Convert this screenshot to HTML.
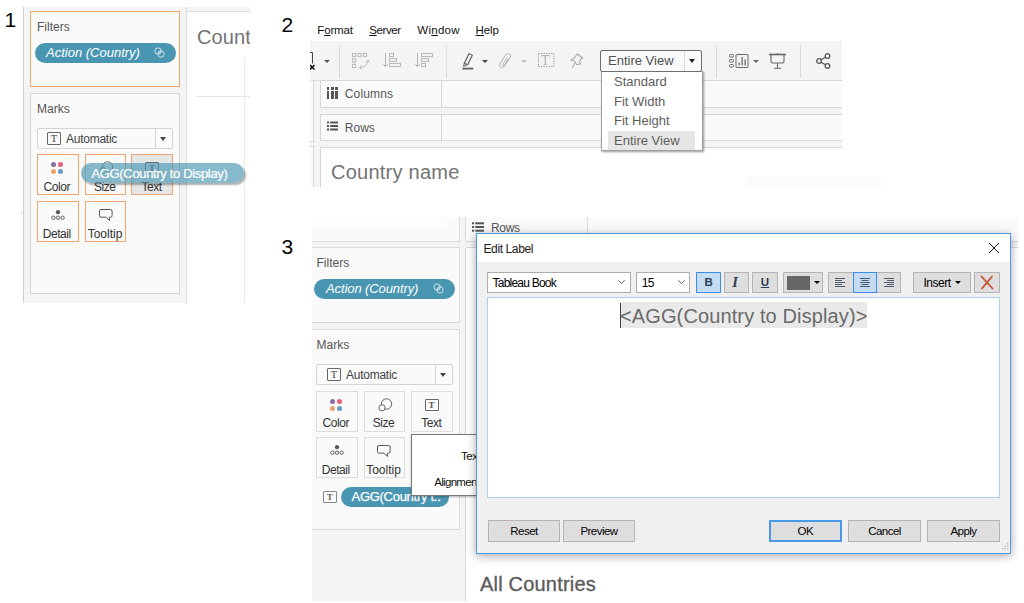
<!DOCTYPE html>
<html>
<head>
<meta charset="utf-8">
<title>Tableau steps</title>
<style>
html,body{margin:0;padding:0;background:#fff;}
body{width:1024px;height:603px;position:relative;overflow:hidden;font-family:"Liberation Sans",sans-serif;color:#333;}
.a{position:absolute;box-sizing:border-box;}
.t{position:absolute;white-space:pre;line-height:1;}
.num{font-size:21px;color:#000;}
.card{background:#fafafa;border:1px solid #d4d4d4;}
.pill{background:#4996b2;border-radius:10px;color:#fff;}
.lbl{font-size:12px;color:#555;}
.mbtn{background:#fafafa;border:1px solid #dcdcdc;}
.mbtn.o{border-color:#f0a56f;}
.mtx{font-size:12px;color:#333;text-align:center;width:100%;left:0;letter-spacing:-0.45px;box-sizing:border-box;}
.dot{position:absolute;width:5px;height:5px;border-radius:50%;}
svg{position:absolute;overflow:visible;}
.mn{font-size:11.5px;color:#111;}
.dd{font-size:13px;color:#5e5e5e;}
.arr{width:0;height:0;border-left:3px solid transparent;border-right:3px solid transparent;border-top:3px solid #555;}
.bt{font-size:11.500px;color:#000;text-align:center;letter-spacing:-0.550px;}
.wbtn{background:#dedede;border-radius:0.5px;border:1px solid #b4b4b4;font-size:12px;color:#000;}
.wbtn.sel{background:#c4ddf4;border-color:#3a8ee6;}
</style>
</head>
<body>

<!-- ================= PANEL 1 ================= -->
<div class="t num" style="left:4.6px;top:9.1px;">1</div>
<div class="a" style="left:20px;top:212px;width:3px;height:1px;background:#e0e0e0;"></div>
<div class="a" id="p1" style="left:23px;top:7px;width:227px;height:296px;background:#fff;overflow:hidden;">
  <div class="a" style="left:0;top:0;width:227px;height:5px;background:#f4f4f4;"></div>
  <div class="a" style="left:163px;top:4px;width:70px;height:300px;background:#fff;border:1px solid #dcdcdc;"></div>
  <!-- side pane -->
  <div class="a" style="left:0;top:0;width:164px;height:296px;background:#f4f4f4;border-left:1px solid #cfcfcf;border-right:1px solid #dedede;"></div>
  <!-- filters card -->
  <div class="a card o" style="left:7px;top:4px;width:150px;height:76px;border-color:#f0a56f;"></div>
  <div class="t lbl" style="left:14px;top:14px;">Filters</div>
  <div class="a pill" style="left:12px;top:36px;width:141px;height:20px;"></div>
  <div class="t" style="left:23px;top:39px;font-size:13px;font-style:italic;color:#fff;">Action (Country)</div>
  <svg style="left:130.700px;top:40px;" width="11.500" height="11.500" viewBox="0 0 13 13"><g opacity="0.82"><circle cx="4.6" cy="4.6" r="3.6" fill="none" stroke="#fff" stroke-width="1"/><circle cx="7.9" cy="7.9" r="3.6" fill="none" stroke="#fff" stroke-width="1"/><path d="M5.2 7.6L7.6 5.2" stroke="#fff" stroke-width="1"/></g></svg>
  <!-- marks card -->
  <div class="a card" style="left:7px;top:86px;width:150px;height:201px;"></div>
  <div class="t lbl" style="left:14px;top:96px;">Marks</div>
  <div class="a" style="left:14px;top:121px;width:136px;height:21px;background:#fafafa;border:1px solid #d4d4d4;border-radius:2px;"></div>
  <div class="a" style="left:132px;top:122px;width:1px;height:19px;background:#d4d4d4;"></div>
  <div class="a" style="left:24px;top:125px;width:14px;height:12.500px;border:1px solid #666;border-radius:1px;"></div>
  <div class="t" style="left:27.700px;top:127px;font-size:10.500px;font-family:'Liberation Serif',serif;color:#444;">T</div>
  <div class="t" style="left:43px;top:125.700px;font-size:12px;color:#444;letter-spacing:-0.25px;">Automatic</div>
  <div class="a" style="left:137px;top:130px;width:0;height:0;border-left:3.5px solid transparent;border-right:3.5px solid transparent;border-top:4px solid #444;"></div>

  <!-- mark buttons -->
  <div class="a mbtn o" style="left:14px;top:147px;width:42px;height:41px;">
    <div class="dot" style="left:13px;top:7px;background:#8b6ca3;"></div>
    <div class="dot" style="left:20px;top:7px;background:#e8607c;"></div>
    <div class="dot" style="left:13px;top:14px;background:#eda26e;"></div>
    <div class="dot" style="left:20px;top:14px;background:#6b9bc8;"></div>
    <div class="t mtx" style="top:26px;padding-right:2.5px;">Color</div>
  </div>
  <div class="a mbtn o" style="left:61.500px;top:147px;width:41.500px;height:41px;">
    <svg style="left:13px;top:5px;" width="16" height="16" viewBox="0 0 16 16"><circle cx="8.5" cy="7" r="5.2" fill="none" stroke="#666" stroke-width="1"/><circle cx="4" cy="10.8" r="3.1" fill="#fafafa" stroke="#666" stroke-width="1"/></svg>
    <div class="t mtx" style="top:26px;padding-right:1px;">Size</div>
  </div>
  <div class="a mbtn o" style="left:108px;top:147px;width:42px;height:41px;background:#e6e6e6;">
    <div class="a" style="left:13px;top:7px;width:14px;height:12px;border:1px solid #666;border-radius:1px;"></div>
    <div class="t" style="left:17px;top:9px;font-size:9px;font-weight:bold;font-family:'Liberation Serif',serif;color:#555;">T</div>
    <div class="t mtx" style="top:26px;padding-right:1px;">Text</div>
  </div>
  <div class="a mbtn o" style="left:14px;top:194px;width:42px;height:41px;">
    <svg style="left:12px;top:8px;" width="16" height="11" viewBox="0 0 16 11"><circle cx="8" cy="2.2" r="2.1" fill="#555"/><circle cx="3.4" cy="7.7" r="1.7" fill="none" stroke="#555" stroke-width="0.9"/><circle cx="8" cy="7.7" r="1.7" fill="none" stroke="#555" stroke-width="0.9"/><circle cx="12.6" cy="7.7" r="1.7" fill="none" stroke="#555" stroke-width="0.9"/></svg>
    <div class="t mtx" style="top:26px;padding-right:2.5px;">Detail</div>
  </div>
  <div class="a mbtn o" style="left:62px;top:194px;width:41px;height:41px;">
    <svg style="left:12.500px;top:6.500px;" width="15" height="13" viewBox="0 0 15 13"><path d="M2 0.500h9.600a1.500 1.500 0 0 1 1.500 1.500v4.700a1.500 1.500 0 0 1-1.500 1.500h-1.200v3.300l-3.300-3.300h-5.100a1.500 1.500 0 0 1-1.500-1.500v-4.700a1.500 1.500 0 0 1 1.500-1.500z" fill="none" stroke="#555" stroke-width="1"/></svg>
    <div class="t mtx" style="top:26px;letter-spacing:0;padding-right:1px;">Tooltip</div>
  </div>

  <!-- canvas -->
  <div class="t" style="left:174px;top:19.5px;font-size:20px;color:#737373;letter-spacing:0.1px;">Count</div>
  <div class="a" style="left:173px;top:89px;width:60px;height:1px;background:#e6e6e6;"></div>
  <div class="a" style="left:221px;top:51px;width:1px;height:245px;background:#ececec;"></div>

  <!-- dragged pill -->
  <div class="a" style="left:58px;top:156px;width:163px;height:20px;border-radius:10px;background:rgba(73,150,178,0.66);box-shadow:2px 2px 2px rgba(0,0,0,0.32);"></div>
  <div class="t" style="left:68.5px;top:159.5px;font-size:13px;color:#fff;letter-spacing:-0.34px;-webkit-text-stroke:0.2px #fff;">AGG(Country to Display)</div>
</div>

<!-- ================= PANEL 2 ================= -->
<div class="t num" style="left:281.5px;top:14.3px;">2</div>
<div class="t mn" style="left:317.3px;top:24.9px;letter-spacing:-0.15px;">F<u>o</u>rmat</div>
<div class="t mn" style="left:369.3px;top:24.9px;letter-spacing:-0.4px;"><u>S</u>erver</div>
<div class="t mn" style="left:417.3px;top:24.9px;letter-spacing:0.27px;">Wi<u>n</u>dow</div>
<div class="t mn" style="left:475.5px;top:24.9px;letter-spacing:-0.05px;"><u>H</u>elp</div>

<div class="a" id="p2" style="left:310px;top:41px;width:532px;height:146px;overflow:hidden;">
  <!-- gray chrome: toolbar + shelves (right part ends at 106) -->
  <div class="a" style="left:0;top:0;width:532px;height:106.500px;background:#f4f4f4;"></div>
  <div class="a" style="left:0;top:0;width:10px;height:146px;background:#f4f4f4;"></div>
  <!-- toolbar bottom line -->
  <div class="a" style="left:0;top:39px;width:532px;height:1px;background:#dcdcdc;"></div>
  <!-- left narrow strip -->
  <div class="a" style="left:0;top:40px;width:4px;height:106px;background:#fafafa;border-right:1px solid #d8d8d8;"></div>
  <div class="a" style="left:0;top:100px;width:5px;height:6px;background:#f4f4f4;border-top:1px solid #d8d8d8;border-bottom:1px solid #d8d8d8;"></div>
  <!-- columns shelf -->
  <div class="a" style="left:10px;top:39px;width:530px;height:28px;background:#fafafa;border:1px solid #d6d6d6;"></div>
  <div class="a" style="left:131px;top:40px;width:1px;height:26px;background:#d6d6d6;"></div>
  <!-- rows shelf -->
  <div class="a" style="left:10px;top:73px;width:530px;height:27px;background:#fafafa;border:1px solid #d6d6d6;"></div>
  <div class="a" style="left:131px;top:74px;width:1px;height:25px;background:#d6d6d6;"></div>
  <!-- canvas -->
  <div class="a" style="left:10px;top:106px;width:530px;height:60px;background:#fff;border:1px solid #d6d6d6;border-bottom:none;"></div>
  <div class="t" style="left:21px;top:121px;font-size:20px;color:#737373;letter-spacing:0.25px;">Country name</div>

  <!-- shelf labels -->
  <div class="a" style="left:17px;top:46px;width:2.4px;height:2.6px;background:#555;"></div>
  <div class="a" style="left:21.2px;top:46px;width:2.4px;height:2.6px;background:#555;"></div>
  <div class="a" style="left:25.4px;top:46px;width:2.4px;height:2.6px;background:#555;"></div>
  <div class="a" style="left:17px;top:50px;width:2.4px;height:8px;background:#555;"></div>
  <div class="a" style="left:21.2px;top:50px;width:2.4px;height:8px;background:#555;"></div>
  <div class="a" style="left:25.4px;top:50px;width:2.4px;height:8px;background:#555;"></div>
  <div class="t" style="left:34.8px;top:47px;font-size:12px;color:#555;letter-spacing:0.15px;">Columns</div>

  <svg style="left:17px;top:80.200px;" width="11" height="10" viewBox="0 0 11 10"><g fill="#555"><rect x="0" y="0.5" width="2" height="2"/><rect x="3.2" y="0.5" width="7.8" height="2"/><rect x="0" y="4" width="2" height="2"/><rect x="3.2" y="4" width="7.800" height="2"/><rect x="0" y="7.500" width="2" height="2"/><rect x="3.2" y="7.500" width="7.800" height="2"/></g></svg>
  <div class="t" style="left:34.8px;top:80.500px;font-size:12px;color:#555;letter-spacing:0;">Rows</div>

  <!-- toolbar separators -->
  <div class="a" style="left:28.500px;top:4px;width:1px;height:33px;background:#dadada;"></div>
  <div class="a" style="left:135.500px;top:4px;width:1px;height:33px;background:#dadada;"></div>
  <div class="a" style="left:406px;top:4px;width:1px;height:33px;background:#dadada;"></div>
  <div class="a" style="left:490px;top:4px;width:1px;height:33px;background:#dadada;"></div>

  <!-- partial icon at left -->
  <svg style="left:0;top:11px;" width="6" height="18" viewBox="0 0 6 18"><path d="M0 0.500H2.500V11.500" fill="none" stroke="#444" stroke-width="1"/><path d="M0 13L4.500 17.500M4.500 13L0 17.500" stroke="#111" stroke-width="1.600"/></svg>
  <div class="a arr" style="left:13.500px;top:19px;border-top-color:#555;"></div>

  <!-- swap icon -->
  <svg style="left:42px;top:12px;" width="18" height="17" viewBox="0 0 18 17"><g fill="none" stroke="#b9b9b9" stroke-width="1"><rect x="0.500" y="0.500" width="3.200" height="3.200"/><rect x="5.900" y="0.500" width="3.200" height="3.200"/><rect x="11.300" y="0.500" width="3.200" height="3.200"/><rect x="0.500" y="5.900" width="3.200" height="3.200"/><rect x="0.500" y="11.300" width="3.200" height="3.200"/><path d="M16.200 7.300Q15.800 13.600 7.600 14.600"/><path d="M14.300 9.400L16.200 7L17.600 9.600M9.900 12.700L7.300 14.600L9.900 16.500"/></g></svg>
  <!-- sort asc -->
  <svg style="left:73px;top:12px;" width="18" height="15" viewBox="0 0 18 15"><g fill="none" stroke="#b9b9b9" stroke-width="1"><path d="M2.500 0V13.500M0.500 11L2.500 13.800L4.500 11"/><rect x="6.500" y="0.500" width="4" height="3"/><rect x="6.500" y="5.500" width="7" height="3"/><rect x="6.500" y="10.500" width="11" height="3"/></g></svg>
  <!-- sort desc -->
  <svg style="left:104.500px;top:12px;" width="18" height="15" viewBox="0 0 18 15"><g fill="none" stroke="#b9b9b9" stroke-width="1"><path d="M2.500 0V13.500M0.500 11L2.500 13.800L4.500 11"/><rect x="6.500" y="0.500" width="11" height="3"/><rect x="6.500" y="5.500" width="7" height="3"/><rect x="6.500" y="10.500" width="4" height="3"/></g></svg>

  <!-- highlighter -->
  <svg style="left:152px;top:12px;" width="12" height="17" viewBox="0 0 12 17"><path d="M7 0.700L10.300 2.200L5.600 11.800L2.300 10.300Z" fill="none" stroke="#606060" stroke-width="1.150"/><path d="M2.300 10.300L1.600 13.200L4.600 12.300" fill="none" stroke="#606060" stroke-width="1"/><rect x="0.300" y="14.700" width="11" height="1.800" fill="#606060"/></svg>
  <div class="a arr" style="left:172px;top:19px;border-top-color:#444;"></div>
  <!-- paperclip -->
  <svg style="left:189px;top:12px;" width="13" height="16" viewBox="0 0 13 16"><path d="M9.500 5.500L5 13.200C4.200 14.600 2.500 15 1.500 14.200C0.400 13.400 0.300 12 1 10.800L6.500 2C7.500 0.500 9.300 0.200 10.500 1.100C11.700 2 11.800 3.500 11 4.800L5.800 12.600C5.400 13.200 4.600 13.300 4.100 12.900C3.600 12.500 3.600 11.800 4 11.200L8.300 4.500" fill="none" stroke="#b0b0b0" stroke-width="1"/></svg>
  <div class="a arr" style="left:211px;top:19px;border-top-color:#bdbdbd;"></div>
  <!-- dashed T -->
  <svg style="left:227.500px;top:12px;" width="17" height="14" viewBox="0 0 17 14"><rect x="0.500" y="0.500" width="15.500" height="13" fill="none" stroke="#a8a8a8" stroke-width="1" stroke-dasharray="1.500 1"/></svg>
  <div class="t" style="left:231px;top:12.500px;font-size:14px;font-family:'Liberation Serif',serif;color:#b2b2b2;">T</div>
  <!-- pin -->
  <svg style="left:260px;top:12px;" width="14" height="16" viewBox="0 0 14 16"><path d="M6.300 0.800L12.500 4.200L11 5.200L10 8.800L11.300 10.500L7.500 11.500L4.500 8.200L1 7.800L4.500 5.200L6 1.800Z" fill="none" stroke="#a6a6a6" stroke-width="1" stroke-linejoin="round" transform="rotate(8 7 6)"/><path d="M5.300 9.500L2.300 15" stroke="#a6a6a6" stroke-width="1"/></svg>

  <!-- fit dropdown -->
  <div class="a" style="left:291px;top:30px;width:102px;height:80px;background:#fff;border:1px solid #a0a0a0;box-shadow:1px 1px 2px rgba(0,0,0,0.4);"></div>
  <div class="a" style="left:297.500px;top:90px;width:87px;height:19px;background:#e6e6e6;"></div>
  <div class="t dd" style="left:304px;top:34px;">Standard</div>
  <div class="t dd" style="left:304px;top:54px;">Fit Width</div>
  <div class="t dd" style="left:304px;top:72.700px;">Fit Height</div>
  <div class="t dd" style="left:304px;top:92.500px;">Entire View</div>
  <div class="a" style="left:290px;top:8.500px;width:101.500px;height:22px;background:#f9f9f9;border:1px solid #6e6e6e;border-radius:2px;"></div>
  <div class="a" style="left:373.500px;top:9.500px;width:1px;height:20px;background:#dcdcdc;"></div>
  <div class="t" style="left:298px;top:13px;font-size:13px;color:#505050;">Entire View</div>
  <div class="a" style="left:378.500px;top:18px;width:0;height:0;border-left:3.500px solid transparent;border-right:3.500px solid transparent;border-top:4px solid #222;"></div>

  <!-- show me -->
  <svg style="left:418.500px;top:13px;" width="20" height="14" viewBox="0 0 20 14"><g fill="none" stroke="#666" stroke-width="1"><rect x="0.500" y="0.500" width="4" height="2.600" rx="1"/><rect x="0.500" y="5.500" width="4" height="2.600" rx="1"/><rect x="0.500" y="10.500" width="4" height="2.600" rx="1"/><rect x="7" y="0.500" width="12" height="13" rx="0.500"/></g><g fill="#666"><rect x="9.500" y="8.500" width="1.300" height="3"/><rect x="12.500" y="3" width="1.300" height="8.500"/><rect x="15.500" y="5.500" width="1.300" height="6"/></g></svg>
  <div class="a arr" style="left:443px;top:19px;border-top-color:#666;"></div>
  <!-- presentation -->
  <svg style="left:459px;top:12px;" width="17" height="16" viewBox="0 0 17 16"><g fill="none" stroke="#666" stroke-width="1.100"><path d="M0 1.500H17" stroke-width="1.600"/><path d="M8.500 0V1.500"/><path d="M2 2V8.500Q2 10 3.500 10H13.500Q15 10 15 8.500V2"/><path d="M8.500 10V15M5 15.200H12"/></g></svg>
  <!-- share -->
  <svg style="left:505.500px;top:12px;" width="15" height="16" viewBox="0 0 15 16"><g fill="none" stroke="#555" stroke-width="1.300"><circle cx="3" cy="8" r="2.300"/><circle cx="11.500" cy="3" r="2.300"/><circle cx="11.500" cy="13" r="2.300"/><path d="M5 6.800L9.500 4.200M5 9.200L9.500 11.800"/></g></svg>
</div>
<!-- faint bar -->
<div class="a" style="left:747px;top:176px;width:134px;height:11px;background:#fbfbfb;"></div>

<!-- ================= PANEL 3 ================= -->
<div class="t num" style="left:281.6px;top:236.1px;">3</div>
<div class="a" id="p3" style="left:312px;top:217px;width:706px;height:384px;background:#fff;overflow:hidden;">
  <!-- top gray chrome strip -->
  <div class="a" style="left:0;top:0;width:706px;height:31px;background:#f4f4f4;"></div>
  <!-- left pane -->
  <div class="a" style="left:0;top:0;width:154px;height:384px;background:#f4f4f4;"></div>
  <!-- box above filters -->
  <div class="a" style="left:-2px;top:-2px;width:150px;height:27px;background:#fafafa;border:1px solid #d9d9d9;"></div>
  <div class="a" style="left:0;top:0;width:134px;height:11px;background:#fdfdfd;"></div>
  <!-- rows shelf -->
  <div class="a" style="left:153px;top:-2px;width:560px;height:27px;border-radius:2px;background:#fafafa;border:1px solid #d9d9d9;"></div>
  <div class="a" style="left:275px;top:0;width:1px;height:23px;background:#d9d9d9;"></div>
  <svg style="left:160px;top:5.300px;" width="12" height="10" viewBox="0 0 13 10" preserveAspectRatio="none"><g fill="#555"><rect x="0" y="0.300" width="2.300" height="2"/><rect x="3.600" y="0.300" width="9.400" height="2"/><rect x="0" y="4" width="2.300" height="2"/><rect x="3.600" y="4" width="9.400" height="2"/><rect x="0" y="7.700" width="2.300" height="2"/><rect x="3.600" y="7.700" width="9.400" height="2"/></g></svg>
  <div class="t" style="left:179px;top:4.500px;font-size:12px;color:#555;letter-spacing:-0.3px;">Rows</div>
  <!-- canvas box -->
  <div class="a" style="left:153px;top:30px;width:560px;height:400px;border-radius:2px;background:#fff;border:1px solid #d9d9d9;"></div>

  <!-- filters card -->
  <div class="a card" style="left:-2px;top:30px;width:150px;height:76px;border-color:#dadada;"></div>
  <div class="t lbl" style="left:4.500px;top:40px;">Filters</div>
  <div class="a pill" style="left:2px;top:62px;width:141px;height:20px;"></div>
  <div class="t" style="left:14px;top:65px;font-size:13px;font-style:italic;color:#fff;letter-spacing:-0.1px;">Action (Country)</div>
  <svg style="left:121px;top:66px;" width="11.500" height="11.500" viewBox="0 0 13 13"><g opacity="0.82"><circle cx="4.600" cy="4.600" r="3.600" fill="none" stroke="#fff" stroke-width="1"/><circle cx="7.900" cy="7.900" r="3.600" fill="none" stroke="#fff" stroke-width="1"/><path d="M5.200 7.600L7.600 5.200" stroke="#fff" stroke-width="1"/></g></svg>

  <!-- marks card -->
  <div class="a card" style="left:-2px;top:112px;width:150px;height:200.500px;border-color:#dadada;"></div>
  <div class="t lbl" style="left:4.500px;top:122px;">Marks</div>
  <div class="a" style="left:4px;top:147px;width:136.500px;height:21px;background:#fafafa;border:1px solid #d4d4d4;border-radius:2px;"></div>
  <div class="a" style="left:122.500px;top:148px;width:1px;height:19px;background:#d4d4d4;"></div>
  <div class="a" style="left:15px;top:151px;width:14px;height:12.500px;border:1px solid #666;border-radius:1px;"></div>
  <div class="t" style="left:18.700px;top:153px;font-size:10.500px;font-family:'Liberation Serif',serif;color:#444;">T</div>
  <div class="t" style="left:34px;top:151.800px;font-size:12px;color:#444;letter-spacing:-0.250px;">Automatic</div>
  <div class="a" style="left:127.500px;top:156px;width:0;height:0;border-left:3.500px solid transparent;border-right:3.500px solid transparent;border-top:4px solid #444;"></div>

  <div class="a mbtn" style="left:4px;top:173.500px;width:42px;height:41px;">
    <div class="dot" style="left:13px;top:7px;background:#8b6ca3;"></div>
    <div class="dot" style="left:20px;top:7px;background:#e8607c;"></div>
    <div class="dot" style="left:13px;top:14px;background:#eda26e;"></div>
    <div class="dot" style="left:20px;top:14px;background:#6b9bc8;"></div>
    <div class="t mtx" style="top:25.500px;padding-right:2.5px;">Color</div>
  </div>
  <div class="a mbtn" style="left:51.500px;top:173.500px;width:41px;height:41px;">
    <svg style="left:13px;top:5px;" width="16" height="16" viewBox="0 0 16 16"><circle cx="8.500" cy="7" r="5.200" fill="none" stroke="#666" stroke-width="1"/><circle cx="4" cy="10.800" r="3.100" fill="#fafafa" stroke="#666" stroke-width="1"/></svg>
    <div class="t mtx" style="top:25.500px;padding-right:1px;">Size</div>
  </div>
  <div class="a mbtn" style="left:98.500px;top:173.500px;width:42.500px;height:41px;">
    <div class="a" style="left:13px;top:7px;width:14px;height:12px;border:1px solid #666;border-radius:1px;"></div>
    <div class="t" style="left:17px;top:9px;font-size:9px;font-weight:bold;font-family:'Liberation Serif',serif;color:#555;">T</div>
    <div class="t mtx" style="top:25.500px;padding-right:1px;">Text</div>
  </div>
  <div class="a mbtn" style="left:4px;top:220px;width:42px;height:41px;">
    <svg style="left:12px;top:7px;" width="16" height="11" viewBox="0 0 16 11"><circle cx="8" cy="2.2" r="2.1" fill="#555"/><circle cx="3.4" cy="7.7" r="1.7" fill="none" stroke="#555" stroke-width="0.9"/><circle cx="8" cy="7.7" r="1.7" fill="none" stroke="#555" stroke-width="0.9"/><circle cx="12.6" cy="7.7" r="1.7" fill="none" stroke="#555" stroke-width="0.9"/></svg>
    <div class="t mtx" style="top:25.500px;padding-right:2.5px;">Detail</div>
  </div>
  <div class="a mbtn" style="left:51.500px;top:220px;width:41px;height:41px;">
    <svg style="left:12px;top:6.500px;" width="15" height="13" viewBox="0 0 15 13"><path d="M2 0.500h9.600a1.500 1.500 0 0 1 1.500 1.500v4.700a1.500 1.500 0 0 1-1.500 1.500h-1.200v3.300l-3.300-3.300h-5.100a1.500 1.500 0 0 1-1.500-1.500v-4.700a1.500 1.500 0 0 1 1.500-1.500z" fill="none" stroke="#555" stroke-width="1"/></svg>
    <div class="t mtx" style="top:25.500px;letter-spacing:0;padding-right:1px;">Tooltip</div>
  </div>

  <!-- text pill row -->
  <div class="a" style="left:11px;top:274px;width:14px;height:12px;border:1px solid #888;border-radius:1px;background:#fafafa;"></div>
  <div class="t" style="left:14.700px;top:276px;font-size:9px;font-weight:bold;font-family:'Liberation Serif',serif;color:#666;">T</div>
  <div class="a pill" style="left:29px;top:270px;width:108px;height:20px;"></div>
  <div class="t" style="left:39.500px;top:273px;font-size:13px;color:#fff;letter-spacing:-0.280px;-webkit-text-stroke:0.25px #fff;">AGG(Country t..</div>

  <!-- popup -->
  <div class="a" style="left:99px;top:217px;width:70px;height:62px;background:#fff;border:1px solid #7a7a7a;border-right:none;box-shadow:0 1px 2px rgba(0,0,0,0.3);"></div>
  <div class="t" style="left:149px;top:233.500px;font-size:11.500px;color:#111;letter-spacing:-0.400px;">Text</div>
  <div class="t" style="left:122.300px;top:259.500px;font-size:11.500px;color:#111;letter-spacing:-0.700px;">Alignment</div>

  <!-- all countries -->
  <div class="t" style="left:168px;top:357px;font-size:20px;color:#5c5c5c;letter-spacing:0.200px;-webkit-text-stroke:0.35px #5c5c5c;">All Countries</div>

  <!-- ============ dialog ============ -->
  <div class="a" id="dlg" style="left:164px;top:16px;width:535px;height:320.500px;background:#f0f0f0;border:1px solid #4c9ae2;box-shadow:0 2px 9px rgba(0,0,0,0.35);">
  </div>
  <div class="a" style="left:165px;top:17px;width:533px;height:27.500px;background:#fff;"></div>
  <div class="t" style="left:171.500px;top:26px;font-size:12px;color:#1a1a1a;letter-spacing:-0.390px;">Edit Label</div>
  <svg style="left:677px;top:25.500px;" width="10" height="10" viewBox="0 0 10 10"><path d="M0 0L10 10M10 0L0 10" stroke="#111" stroke-width="1"/></svg>

  <!-- toolbar row -->
  <div class="a" style="left:175px;top:55px;width:144px;height:20.500px;background:#fff;border:1px solid #adadad;"></div>
  <div class="t" style="left:180.500px;top:59.500px;font-size:12px;color:#000;letter-spacing:-0.770px;">Tableau Book</div>
  <svg style="left:306px;top:63px;" width="7" height="4" viewBox="0 0 7 4"><path d="M0.300 0.300L3.500 3.500L6.700 0.300" fill="none" stroke="#555" stroke-width="0.900"/></svg>
  <div class="a" style="left:324px;top:55px;width:54px;height:20.500px;background:#fff;border:1px solid #adadad;"></div>
  <div class="t" style="left:329.800px;top:59.500px;font-size:12px;color:#000;letter-spacing:-0.800px;">15</div>
  <svg style="left:366px;top:63px;" width="7" height="4" viewBox="0 0 7 4"><path d="M0.300 0.300L3.500 3.500L6.700 0.300" fill="none" stroke="#555" stroke-width="0.900"/></svg>

  <div class="a wbtn sel" style="left:384px;top:55px;width:25px;height:20.500px;"></div>
  <div class="t" style="left:392.500px;top:59.500px;font-size:11.500px;font-weight:bold;color:#2b3b50;">B</div>
  <div class="a wbtn" style="left:412px;top:55px;width:25px;height:20.500px;"></div>
  <div class="t" style="left:420.300px;top:58.300px;font-size:14.500px;font-weight:bold;font-style:italic;font-family:'Liberation Serif',serif;color:#2b3b50;">I</div>
  <div class="a wbtn" style="left:440px;top:55px;width:25.500px;height:20.500px;"></div>
  <div class="t" style="left:448.800px;top:59.500px;font-size:11.500px;font-weight:bold;color:#2b3b50;text-decoration:underline;">U</div>
  <div class="a wbtn" style="left:471px;top:55px;width:39.500px;height:20.500px;"></div>
  <div class="a" style="left:475px;top:58.500px;width:22.500px;height:14px;background:#666;"></div>
  <div class="a" style="left:501.500px;top:64px;width:0;height:0;border-left:3px solid transparent;border-right:3px solid transparent;border-top:3.500px solid #000;"></div>

  <div class="a wbtn" style="left:516px;top:55px;width:73px;height:20.500px;"></div>
  <div class="a wbtn sel" style="left:540.500px;top:55px;width:24.500px;height:20.500px;"></div>
  <svg style="left:523px;top:60.500px;" width="10" height="10" viewBox="0 0 10 10"><path d="M0 0.500H10M0 2.500H7M0 4.500H10M0 6.500H7M0 8.500H10" stroke="#3b4a5e" stroke-width="0.900"/></svg>
  <svg style="left:547.500px;top:60.500px;" width="10" height="10" viewBox="0 0 10 10"><path d="M0 0.500H10M1.500 2.500H8.500M0 4.500H10M1.500 6.500H8.500M0 8.500H10" stroke="#3b4a5e" stroke-width="0.900"/></svg>
  <svg style="left:571.500px;top:60.500px;" width="10" height="10" viewBox="0 0 10 10"><path d="M0 0.500H10M3 2.500H10M0 4.500H10M3 6.500H10M0 8.500H10" stroke="#3b4a5e" stroke-width="0.900"/></svg>

  <div class="a wbtn" style="left:601px;top:55px;width:58px;height:20.500px;"></div>
  <div class="t" style="left:611.500px;top:59.500px;font-size:12px;color:#000;letter-spacing:-0.500px;">Insert</div>
  <div class="a" style="left:642.500px;top:64px;width:0;height:0;border-left:3px solid transparent;border-right:3px solid transparent;border-top:3.500px solid #000;"></div>
  <div class="a wbtn" style="left:662px;top:55px;width:26px;height:20.500px;"></div>
  <svg style="left:669px;top:59px;" width="12" height="13" viewBox="0 0 12 13"><path d="M0.500 0.500L11.500 12.500M11 0.500L1 12.500" stroke="#c9502c" stroke-width="1.800" stroke-linecap="round"/></svg>

  <!-- text area -->
  <div class="a" style="left:175px;top:80px;width:513px;height:200.500px;background:#fff;border:1px solid #a9cff2;"></div>
  <div class="a" style="left:308px;top:84.500px;width:247px;height:26.500px;background:#e9e9e9;"></div>
  <div class="a" style="left:308px;top:85.500px;width:1px;height:25px;background:#444;"></div>
  <div class="t" style="left:308px;top:88.800px;font-size:20px;color:#6a6a6a;letter-spacing:0.120px;">&lt;AGG(Country to Display)&gt;</div>

  <!-- bottom buttons -->
  <div class="a wbtn" style="left:176px;top:303px;width:72px;height:22px;"></div>
  <div class="t bt" style="left:176px;top:308.700px;width:72px;">Reset</div>
  <div class="a wbtn" style="left:251px;top:303px;width:72px;height:22px;"></div>
  <div class="t bt" style="left:251px;top:308.700px;width:72px;">Preview</div>
  <div class="a wbtn" style="left:457px;top:303px;width:72.500px;height:22px;border:2px solid #4a98e8;"></div>
  <div class="t bt" style="left:457px;top:308.700px;width:72.500px;">OK</div>
  <div class="a wbtn" style="left:536px;top:303px;width:73px;height:22px;"></div>
  <div class="t bt" style="left:536px;top:308.700px;width:73px;">Cancel</div>
  <div class="a wbtn" style="left:615px;top:303px;width:73px;height:22px;"></div>
  <div class="t bt" style="left:615px;top:308.700px;width:73px;">Apply</div>
  <!-- grip -->
  <svg style="left:690px;top:326px;" width="7" height="7" viewBox="0 0 7 7"><g fill="#bdbdbd"><rect x="5" y="0" width="1.500" height="1.500"/><rect x="2.500" y="2.500" width="1.500" height="1.500"/><rect x="5" y="2.500" width="1.500" height="1.500"/><rect x="0" y="5" width="1.500" height="1.500"/><rect x="2.500" y="5" width="1.500" height="1.500"/><rect x="5" y="5" width="1.500" height="1.500"/></g></svg>
</div>

</body>
</html>
